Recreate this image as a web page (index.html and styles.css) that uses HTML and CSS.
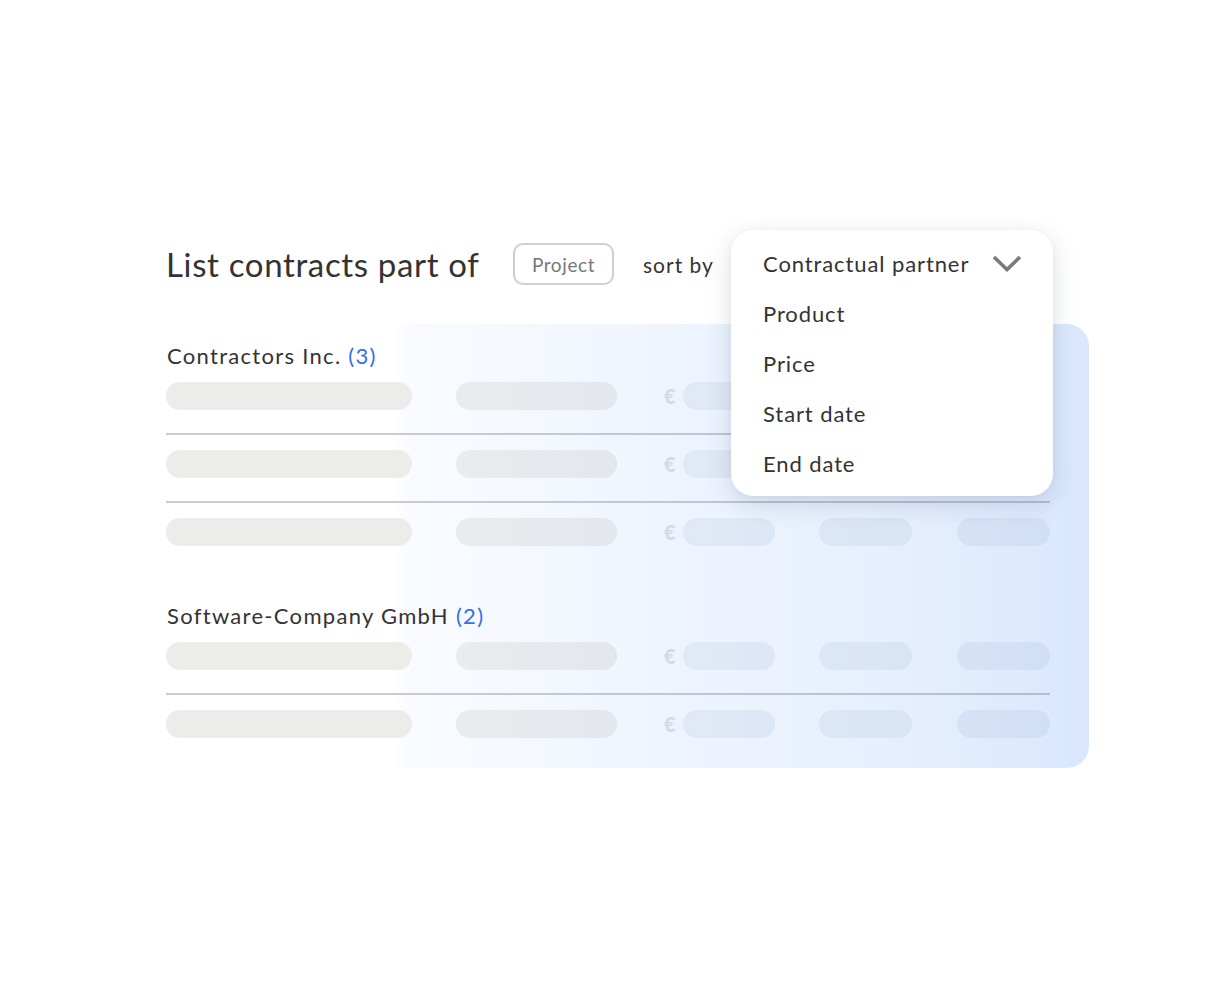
FILE: index.html
```html
<!DOCTYPE html>
<html lang="en">
<head>
<meta charset="utf-8">
<title>List contracts</title>
<link rel="stylesheet" href="styles.css">
</head>
<body>
<div class="wrap">
  <div class="header">
    <h1 class="title">List contracts part of</h1>
    <span class="chip">Project</span>
    <span class="sort-label">sort by</span>
    <div class="sort-anchor">
      <ul class="dropdown">
        <li class="dd-item dd-current">Contractual partner
          <svg class="chev" width="30" height="17" viewBox="0 0 30 17"><polyline points="2,2 15,14.5 28,2" fill="none" stroke="#7a7a7a" stroke-width="3.6"/></svg>
        </li>
        <li class="dd-item">Product</li>
        <li class="dd-item">Price</li>
        <li class="dd-item">Start date</li>
        <li class="dd-item">End date</li>
      </ul>
    </div>
  </div>

  <div class="panel">
    <section class="group">
      <h2 class="group-title">Contractors Inc. <span class="count">(3)</span></h2>
      <div class="row">
        <span class="bar b1"></span><span class="bar b2"></span>
        <span class="price"><span class="euro">€</span><span class="bar b3"></span></span>
        <span class="bar b4"></span><span class="bar b5"></span>
      </div>
      <div class="row">
        <span class="bar b1"></span><span class="bar b2"></span>
        <span class="price"><span class="euro">€</span><span class="bar b3"></span></span>
        <span class="bar b4"></span><span class="bar b5"></span>
      </div>
      <div class="row">
        <span class="bar b1"></span><span class="bar b2"></span>
        <span class="price"><span class="euro">€</span><span class="bar b3"></span></span>
        <span class="bar b4"></span><span class="bar b5"></span>
      </div>
    </section>
    <section class="group">
      <h2 class="group-title">Software-Company GmbH <span class="count">(2)</span></h2>
      <div class="row">
        <span class="bar b1"></span><span class="bar b2"></span>
        <span class="price"><span class="euro">€</span><span class="bar b3"></span></span>
        <span class="bar b4"></span><span class="bar b5"></span>
      </div>
      <div class="row">
        <span class="bar b1"></span><span class="bar b2"></span>
        <span class="price"><span class="euro">€</span><span class="bar b3"></span></span>
        <span class="bar b4"></span><span class="bar b5"></span>
      </div>
    </section>
  </div>
</div>
</body>
</html>
```

FILE: styles.css
```css
* { box-sizing: border-box; }
html, body { margin: 0; padding: 0; background: #ffffff; }
body {
  font-family: "Lato", "Open Sans", sans-serif;
  color: #333333;
}
.wrap {
  width: 923px;
  margin-left: 166px;
  padding-top: 243px;
}
.header {
  display: flex;
  align-items: center;
  height: 42px;
}
.title {
  margin: 0;
  width: 313px;
  white-space: nowrap;
  font-size: 33px;
  font-weight: 400;
  color: #333;
  letter-spacing: 0.65px;
  line-height: 42px;
}
.chip {
  margin-left: 34px;
  height: 42px;
  width: 101px;
  border: 2px solid #cfcfcf;
  border-radius: 10px;
  display: flex;
  align-items: center;
  justify-content: center;
  font-size: 19px;
  letter-spacing: 0.6px;
  color: #777;
}
.sort-label {
  margin-left: 29px;
  width: 71px;
  white-space: nowrap;
  font-size: 21px;
  letter-spacing: 1px;
  color: #333;
}
.sort-anchor {
  position: relative;
  margin-left: 17px;
  align-self: stretch;
}
.dropdown {
  position: absolute;
  left: 0;
  top: -13px;
  width: 322px;
  margin: 0;
  padding: 8px 32px;
  list-style: none;
  background: #fff;
  border-radius: 22px;
  box-shadow: 0 8px 26px rgba(30, 50, 90, 0.15), 0 0 6px rgba(0, 0, 0, 0.04);
  z-index: 2;
}
.dd-item {
  height: 50px;
  display: flex;
  align-items: center;
  justify-content: space-between;
  font-size: 22px;
  letter-spacing: 0.9px;
  color: #333;
}
.chev { display: block; margin-right: -1px; }
.panel {
  margin-top: 39px;
  padding: 18px 39px 30px 0;
  border-radius: 0 22px 22px 0;
  background: linear-gradient(90deg,
    rgba(255,255,255,0) 0,
    rgba(255,255,255,0) 229px,
    #f9fbff 240px,
    #eef4fe 520px,
    #e4eefd 760px,
    #d9e7fd 100%);
}
.group + .group { margin-top: 56px; }
.group-title {
  margin: 0 0 12px 1px;
  font-size: 22px;
  line-height: 28px;
  font-weight: 400;
  letter-spacing: 1.3px;
  color: #333;
}
.count { color: #2f6ff0; }
.row {
  display: flex;
  align-items: center;
  height: 28px;
  box-sizing: content-box;
  padding-bottom: 23px;
  border-bottom: 2px solid rgba(40, 50, 70, 0.24);
  margin-bottom: 15px;
}
.row:last-child {
  padding-bottom: 0;
  border-bottom: none;
  margin-bottom: 0;
}
.bar {
  display: block;
  height: 28px;
  border-radius: 14px;
  background: rgba(140, 160, 195, 0.13);
}
.b1 { width: 246px; background: #ececeb; }
.b2 { width: 161px; margin-left: 44px; background: linear-gradient(90deg, #eaebec, #e3e7ee); }
.price { display: flex; align-items: center; margin-left: 47px; }
.euro {
  width: 14px;
  margin-right: 5px;
  font-size: 20px;
  font-weight: 900;
  color: #d3dae6;
  line-height: 28px;
}
.b3 { width: 92px; }
.b4 { width: 93px; margin-left: 44px; }
.b5 { width: 93px; margin-left: 45px; }
```
